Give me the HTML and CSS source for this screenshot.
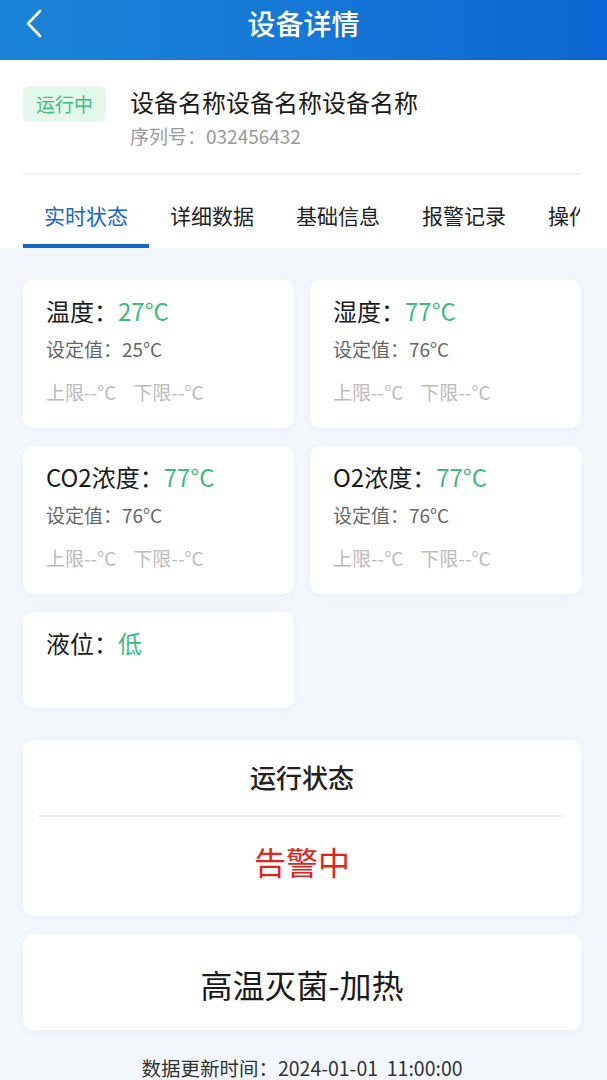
FILE: index.html
```html
<!DOCTYPE html>
<html lang="zh-CN">
  <head>
    <meta charset="UTF-8" />
    <meta name="viewport" content="width=device-width, initial-scale=1.0" />
    <title>设备详情</title>
    <link rel="stylesheet" href="styles.css">
  </head>
  <body>
    <header class="nav-bar">
      <span class="back">
        <svg width="20" height="32" viewBox="0 0 20 32">
          <path d="M16 3 L4 15.5 L16 28" fill="none" stroke="#fff" stroke-width="2.6" stroke-linecap="round" stroke-linejoin="round" />
        </svg>
      </span>
      <h1>设备详情</h1>
    </header>

    <section class="device">
      <div class="device-head">
        <span class="badge">运行中</span>
        <div class="device-info">
          <div class="device-name">设备名称设备名称设备名称</div>
          <div class="device-sn">序列号：032456432</div>
        </div>
      </div>
      <nav class="tabs">
        <span class="tab active">实时状态</span>
        <span class="tab">详细数据</span>
        <span class="tab">基础信息</span>
        <span class="tab">报警记录</span>
        <span class="tab">操作记录</span>
      </nav>
    </section>

    <main class="content">
      <div class="grid">
        <div class="card">
          <div class="value-line">温度：<span class="value">27°C</span></div>
          <div class="set">设定值：25°C</div>
          <div class="limit">上限--°C<span class="gap"></span>下限--°C</div>
        </div>
        <div class="card">
          <div class="value-line">湿度：<span class="value">77°C</span></div>
          <div class="set">设定值：76°C</div>
          <div class="limit">上限--°C<span class="gap"></span>下限--°C</div>
        </div>
        <div class="card">
          <div class="value-line">CO2浓度：<span class="value">77°C</span></div>
          <div class="set">设定值：76°C</div>
          <div class="limit">上限--°C<span class="gap"></span>下限--°C</div>
        </div>
        <div class="card">
          <div class="value-line">O2浓度：<span class="value">77°C</span></div>
          <div class="set">设定值：76°C</div>
          <div class="limit">上限--°C<span class="gap"></span>下限--°C</div>
        </div>
        <div class="card short">
          <div class="value-line">液位：<span class="value">低</span></div>
        </div>
      </div>

      <div class="panel status">
        <div class="status-title">运行状态</div>
        <div class="status-value">告警中</div>
      </div>

      <div class="panel mode">高温灭菌-加热</div>

      <p class="update">数据更新时间：2024-01-01&nbsp;&nbsp;11:00:00</p>
    </main>
  </body>
</html>
```

FILE: styles.css
```css
* {
  box-sizing: border-box;
}
body {
  margin: 0;
  width: 607px;
  height: 1080px;
  overflow: hidden;
  font-family: "Noto Sans CJK SC", "Noto Sans", sans-serif;
  background-color: #f3f7fb;
  color: #222;
}
.nav-bar {
  position: relative;
  height: 60px;
  padding-bottom: 14px;
  display: flex;
  align-items: center;
  justify-content: center;
  background: linear-gradient(90deg, #1a84d8 0%, #1577d6 50%, #0b65d2 100%);
}
.nav-bar h1 {
  margin: 0;
  color: white;
  font-size: 28px;
  line-height: 36px;
  font-weight: 500;
}
.back {
  position: absolute;
  left: 24px;
  top: 8px;
  display: flex;
}
.device {
  background-color: white;
  padding: 0 27px 0 23px;
}
.device-head {
  display: flex;
  align-items: flex-start;
  padding: 25px 0 24px;
  border-bottom: 2px solid #f0f2f5;
}
.badge {
  width: 83px;
  height: 36px;
  line-height: 36px;
  margin-top: 1px;
  text-align: center;
  border-radius: 6px;
  background-color: #e3f7ec;
  color: #3fbd80;
  font-size: 19px;
}
.device-info {
  margin-left: 24px;
}
.device-name {
  font-size: 24px;
  line-height: 34px;
  color: #1a1a1a;
}
.device-sn {
  margin-top: 4px;
  font-size: 19px;
  line-height: 26px;
  color: #999;
}
.tabs {
  display: flex;
  overflow: hidden;
  white-space: nowrap;
}
.tab {
  flex: 0 0 126px;
  height: 73px;
  padding-top: 22px;
  text-align: center;
  font-size: 21px;
  line-height: 36px;
  color: #222;
  border-bottom: 4px solid transparent;
}
.tab.active {
  color: #1767c9;
  border-bottom-color: #1565c8;
}
.content {
  padding: 32px 26px 0 23px;
}
.grid {
  display: grid;
  grid-template-columns: 271px 271px;
  column-gap: 16px;
  row-gap: 18px;
}
.card,
.panel {
  background-color: white;
  border-radius: 10px;
  box-shadow: 0 2px 10px rgba(150, 180, 210, 0.12);
}
.card {
  height: 148px;
  padding: 14px 23px 0;
}
.card.short {
  height: 96px;
}
.value-line {
  font-size: 24px;
  line-height: 34px;
  color: #1a1a1a;
}
.value {
  color: #3dba82;
}
.set {
  margin-top: 8px;
  font-size: 19px;
  line-height: 26px;
  color: #666;
}
.limit {
  margin-top: 17px;
  font-size: 19px;
  line-height: 26px;
  color: #bbb;
}
.limit .gap {
  display: inline-block;
  width: 17px;
}
.panel {
  margin-top: 32px;
}
.status {
  height: 176px;
  padding: 0 16px;
  text-align: center;
}
.status-title {
  height: 77px;
  line-height: 74px;
  font-size: 26px;
  font-weight: 500;
  border-bottom: 2px solid #eef0f3;
}
.status-value {
  line-height: 88px;
  font-size: 32px;
  color: #e2231a;
}
.mode {
  margin-top: 18px;
  height: 96px;
  line-height: 100px;
  text-align: center;
  font-size: 32px;
  color: #1a1a1a;
}
.update {
  margin: 24px 0 0;
  text-align: center;
  font-size: 19.5px;
  line-height: 28px;
  color: #333;
}
```
